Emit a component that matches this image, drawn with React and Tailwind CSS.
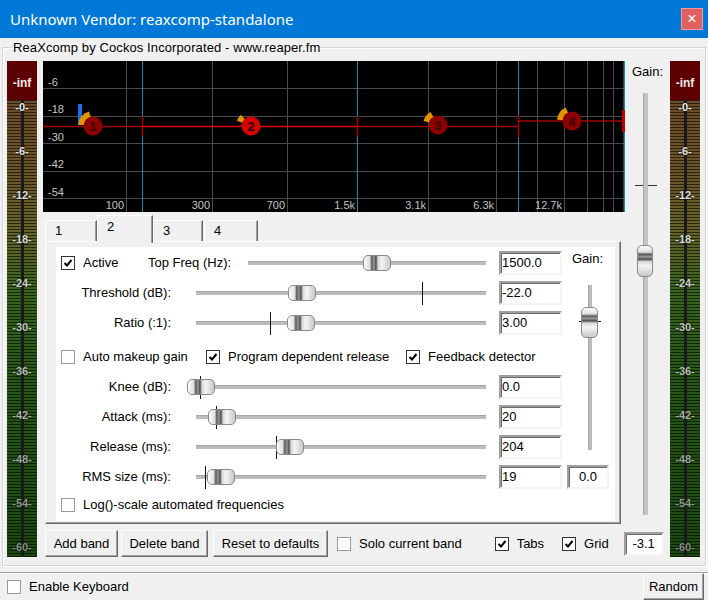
import React from 'react';

const meterLabels = [
  ['-0-', 'text-[#ececec]'],
  ['-6-', 'text-[#e4e4e4]'],
  ['-12-', 'text-[#dedede]'],
  ['-18-', 'text-[#d6dad2]'],
  ['-24-', 'text-[#cad2c6]'],
  ['-30-', 'text-[#bec8ba]'],
  ['-36-', 'text-[#b2beae]'],
  ['-42-', 'text-[#a6b2a2]'],
  ['-48-', 'text-[#9aa696]'],
  ['-54-', 'text-[#8e9a8c]'],
  ['-60-', 'text-[#828e82]'],
];

function Meter() {
  return (
    <div className="w-[30px] h-[496px] flex flex-col shrink-0">
      <div className="h-[39px] pt-[4px] bg-[#5c0000] flex items-center justify-center text-[12px] font-bold text-[#f4e8e8]">
        -inf
      </div>
      <div className="flex-1 flex flex-col items-center gap-[30px] bg-[linear-gradient(to_right,transparent_14px,#1a1a1a_14px,#1a1a1a_17px,transparent_17px),repeating-linear-gradient(to_bottom,rgba(0,0,0,0.6)_0px,rgba(0,0,0,0.6)_1px,transparent_1px,transparent_3px),linear-gradient(to_bottom,#6e4c2a_0%,#6a5628_16%,#66622a_28%,#3a641e_42%,#285818_60%,#1c4810_100%)]">
        {meterLabels.map(([t, c]) => (
          <div key={t} className={`h-[14px] leading-[14px] text-[11px] font-bold ${c} [text-shadow:0_0_2px_#000]`}>
            {t}
          </div>
        ))}
      </div>
    </div>
  );
}

function Graph() {
  const hLines = [27, 55, 82, 110, 137];
  const dbLabels = [['-6', 25], ['-18', 52], ['-30', 80], ['-42', 107], ['-54', 135]];
  const vGray = [126, 212, 287, 357, 428, 496, 537, 564, 587, 603, 613];
  const vTeal = [142, 357, 518, 624];
  const freq = [['100', 124], ['300', 210], ['700', 285], ['1.5k', 355], ['3.1k', 426], ['6.3k', 494], ['12.7k', 562]];
  const bands = [
    { n: '1', cx: 50, cy: 65, a: [185, 255], sel: false },
    { n: '2', cx: 208, cy: 65, a: [200, 228], sel: true },
    { n: '3', cx: 395, cy: 64, a: [195, 240], sel: false },
    { n: '4', cx: 529, cy: 60, a: [185, 245], sel: false },
  ];
  const wedge = (cx, cy, [a1, a2], r = 15) => {
    const p = (a) => [cx + r * Math.cos((a * Math.PI) / 180), cy + r * Math.sin((a * Math.PI) / 180)];
    const [x1, y1] = p(a1);
    const [x2, y2] = p(a2);
    return `M${cx} ${cy} L${x1} ${y1} A${r} ${r} 0 0 1 ${x2} ${y2} Z`;
  };
  return (
    <svg width="582" height="151" className="block bg-black" fontFamily="Liberation Sans, Arial, sans-serif">
      {hLines.map((y) => (
        <line key={y} x1="0" x2="582" y1={y + 0.5} y2={y + 0.5} stroke="#4a4a4a" />
      ))}
      {vGray.map((x) => (
        <line key={x} x1={x - 43 + 0.5} x2={x - 43 + 0.5} y1="0" y2="151" stroke="#4a4a4a" />
      ))}
      {vTeal.map((x) => (
        <line key={'t' + x} x1={x - 43 + 0.5} x2={x - 43 + 0.5} y1="0" y2="151" stroke="#1f88aa" strokeWidth={x === 624 ? 2 : 1} />
      ))}
      {dbLabels.map(([t, y]) => (
        <text key={t} x="5" y={y} fontSize="11" fill="#c4c4c4">{t}</text>
      ))}
      {freq.map(([t, x]) => (
        <text key={t} x={x - 43} y="148" fontSize="11" fill="#c4c4c4" textAnchor="end">{t}</text>
      ))}
      <line x1="0" x2="99" y1="65.5" y2="65.5" stroke="#a00000" strokeWidth="1.5" />
      <line x1="99" x2="314" y1="65.5" y2="65.5" stroke="#e00000" strokeWidth="1.5" />
      <line x1="314" x2="475" y1="65.5" y2="65.5" stroke="#a00000" strokeWidth="1.5" />
      <line x1="475" x2="582" y1="60" y2="60" stroke="#a00000" strokeWidth="1.5" />
      <line x1="99.5" x2="99.5" y1="55" y2="75" stroke="#a00000" strokeWidth="1.5" />
      <line x1="314.5" x2="314.5" y1="55" y2="75" stroke="#a00000" strokeWidth="1.5" />
      <line x1="475.5" x2="475.5" y1="54" y2="76" stroke="#a00000" strokeWidth="1.5" />
      <line x1="580.5" x2="580.5" y1="49" y2="71" stroke="#c00000" strokeWidth="3" />
      <rect x="35" y="43" width="4" height="21" fill="#1e6ee6" />
      {bands.map((b) => (
        <g key={b.n}>
          <path d={wedge(b.cx, b.cy, b.a)} fill="#e09400" />
          <circle cx={b.cx} cy={b.cy} r="9.5" fill={b.sel ? '#d40000' : '#8c0000'} />
          <text x={b.cx} y={b.cy + 4.5} fontSize="13" fontWeight="bold" textAnchor="middle" fill={b.sel ? '#2a0000' : '#3a0000'}>
            {b.n}
          </text>
        </g>
      ))}
    </svg>
  );
}

function Check({ checked, label, className = '' }) {
  return (
    <div className={`flex items-center ${className}`}>
      <div className={`w-[14px] h-[14px] shrink-0 bg-white border ${checked ? 'border-[#333]' : 'border-[#9a9a9a]'} flex items-center justify-center`}>
        {checked && (
          <svg width="10" height="10" viewBox="0 0 10 10">
            <path d="M1.5 5 L4 7.5 L8.5 2" fill="none" stroke="#000" strokeWidth="2" />
          </svg>
        )}
      </div>
      {label && <span className="ml-[8px] whitespace-nowrap">{label}</span>}
    </div>
  );
}

function Field({ value, className = '', center = false }) {
  return (
    <div
      className={`h-[24px] bg-white border-2 border-t-[#a0a0a0] border-l-[#a0a0a0] border-r-[#f4f4f4] border-b-[#f4f4f4] shadow-[inset_1px_1px_0_#6a6a6a] flex items-center ${center ? 'justify-center' : 'pl-[1px]'} ${className}`}
    >
      {value}
    </div>
  );
}

function Thumb() {
  return (
    <div className="w-[28px] h-[16px] rounded-[5px] border border-[#8a8a8a] bg-[linear-gradient(to_right,#fbfbfb_0%,#e0e0e0_22%,#5a5a5a_30%,#9a9a9a_38%,#4e4e4e_46%,#d8d8d8_54%,#f4f4f4_68%,#c8c8c8_100%)]" />
  );
}

function HSlider({ thumb, tick, className = '', start = 196, end = 486 }) {
  return (
    <div className={`relative h-[24px] shrink-0 ${className}`} style={{ width: end - start }}>
      <div className="absolute left-0 right-0 top-[10px] h-[4px] bg-[#bcbcbc] border-t border-[#a6a6a6]" />
      {tick != null && <div className="absolute top-[1px] w-[1px] h-[23px] bg-[#111]" style={{ left: tick - start }} />}
      <div className="absolute top-[4px]" style={{ left: thumb - start }}>
        <Thumb />
      </div>
    </div>
  );
}

function SliderRow({ label, thumb, tick, value }) {
  return (
    <div className="h-[30px] flex items-center">
      <div className="w-[115px] text-right whitespace-nowrap">{label}</div>
      <HSlider thumb={thumb} tick={tick} className="ml-[25px]" />
      <Field value={value} className="ml-[13px] w-[63px]" />
    </div>
  );
}

function VThumb({ h = 31, w = 17 }) {
  return (
    <div
      className="rounded-[5px] border border-[#8a8a8a] bg-[linear-gradient(to_bottom,#fbfbfb_0%,#e0e0e0_20%,#5a5a5a_28%,#9a9a9a_36%,#4e4e4e_44%,#d8d8d8_52%,#f4f4f4_66%,#c8c8c8_100%)]"
      style={{ width: w, height: h }}
    />
  );
}

function Tab({ label, selected, className = '' }) {
  return (
    <div
      className={`relative border-t border-l border-white border-r border-r-[#696969] shadow-[inset_-1px_0_0_#a0a0a0] leading-[15px] ${
        selected ? 'h-[28px] -mb-[2px] z-10 bg-[#f0f0f0] pt-[3px]' : 'h-[21px] pt-[2px]'
      } pl-[9px] ${className}`}
    >
      {label}
    </div>
  );
}

function Button({ children, className = '' }) {
  return (
    <div
      className={`h-[27px] flex items-center justify-center bg-[#f0f0f0] border border-t-white border-l-white border-r-[#696969] border-b-[#696969] shadow-[inset_-1px_-1px_0_#a0a0a0] whitespace-nowrap ${className}`}
    >
      {children}
    </div>
  );
}

export default function App() {
  return (
    <div className="w-[708px] h-[600px] bg-[#f0f0f0] flex flex-col overflow-hidden text-[13px] text-black font-['Liberation_Sans',Arial,sans-serif]">
      {/* title bar */}
      <div className="h-[38px] shrink-0 bg-[#0078d7] flex items-center justify-between pl-[10px] pr-[5px]">
        <span className="text-white text-[15px] font-['Noto_Sans',sans-serif] leading-none">Unknown Vendor: reaxcomp-standalone</span>
        <div className="w-[22px] h-[22px] bg-[#e06060] border border-[#f09a9a] flex items-center justify-center text-white text-[16px] leading-none">
          ×
        </div>
      </div>

      {/* group box */}
      <fieldset className="mx-[2px] mt-[2px] h-[528px] border border-[#d5d5d5] shadow-[1px_1px_0_#fff,inset_1px_1px_0_#fff] pl-[4px] pr-[4px] pt-[6px]">
        <legend className="ml-[5px] px-[1px] h-[15px] leading-[15px] tracking-[0.1px]">ReaXcomp by Cockos Incorporated - www.reaper.fm</legend>
        <div className="flex">
          <Meter />
          <div className="ml-[6px] w-[625px] flex flex-col">
            <div className="flex">
              <div className="w-[582px] flex flex-col">
                <Graph />
                {/* tabs */}
                <div className="mt-[3px] h-[26px] flex items-end pl-[2px]">
                  <Tab label="1" className="w-[52px]" />
                  <Tab label="2" selected className="w-[56px]" />
                  <Tab label="3" className="w-[50px]" />
                  <Tab label="4" className="w-[54px] ml-[1px]" />
                </div>
                <div className="ml-[2px] w-[576px] h-[283px] border border-t-white border-l-white border-r-[#696969] border-b-[#696969] shadow-[inset_-1px_-1px_0_#a0a0a0] pl-[10px] pt-[5px]">
                  <div className="w-[559px] h-[274px] bg-white flex pt-[1px]">
                    <div className="w-[506px] flex flex-col">
                      <div className="h-[30px] flex items-center">
                        <div className="w-[92px] pl-[5px]">
                          <Check checked label="Active" />
                        </div>
                        <div className="w-[100px] whitespace-nowrap">Top Freq (Hz):</div>
                        <HSlider start={248} thumb={363} />
                        <Field value="1500.0" className="ml-[13px] w-[63px]" />
                      </div>
                      <SliderRow label="Threshold (dB):" thumb={288} tick={422} value="-22.0" />
                      <SliderRow label="Ratio (:1):" thumb={287} tick={270} value="3.00" />
                      <div className="h-[34px] pt-[4px] flex items-center">
                        <div className="w-[150px] pl-[5px]">
                          <Check label="Auto makeup gain" />
                        </div>
                        <div className="w-[200px]">
                          <Check checked label="Program dependent release" />
                        </div>
                        <Check checked label="Feedback detector" />
                      </div>
                      <SliderRow label="Knee (dB):" thumb={187} tick={200} value="0.0" />
                      <SliderRow label="Attack (ms):" thumb={208} tick={216} value="20" />
                      <SliderRow label="Release (ms):" thumb={276} tick={276} value="204" />
                      <SliderRow label="RMS size (ms):" thumb={207} tick={205} value="19" />
                      <div className="h-[26px] flex items-center pl-[5px]">
                        <Check label="Log()-scale automated frequencies" />
                      </div>
                    </div>
                    {/* band gain column */}
                    <div className="ml-[5px] w-[42px] flex flex-col">
                      <div className="mt-[3px] h-[16px] leading-[16px] pl-[5px]">Gain:</div>
                      <div className="mt-[18px] ml-[21px] relative w-[4px] h-[165px] bg-[#bcbcbc] border-l border-[#a6a6a6]">
                        <div className="absolute left-[-10px] top-[36px] w-[22px] h-[1px] bg-[#111]" />
                        <div className="absolute left-[-8px] top-[22px]">
                          <VThumb />
                        </div>
                      </div>
                      <Field value="0.0" center className="mt-[15px] w-[42px]" />
                    </div>
                  </div>
                </div>
              </div>
              {/* master gain column */}
              <div className="w-[43px] flex flex-col">
                <div className="mt-[3px] h-[15px] leading-[15px] pl-[7px]">Gain:</div>
                <div className="mt-[14px] ml-[18px] relative w-[5px] h-[422px]">
                  <div className="absolute left-[-8px] top-[92px] w-[22px] h-[1px] bg-[#333]" />
                  <div className="absolute inset-0 bg-[#c4c4c4] border-l border-[#a6a6a6]" />
                  <div className="absolute left-[-6px] top-[152px]">
                    <VThumb h={32} w={16} />
                  </div>
                </div>
              </div>
            </div>
            {/* button row */}
            <div className="mt-[6px] h-[27px] flex items-center">
              <Button className="ml-[2px] w-[73px]">Add band</Button>
              <Button className="ml-[3px] w-[87px]">Delete band</Button>
              <Button className="ml-[5px] w-[115px]">Reset to defaults</Button>
              <Check label="Solo current band" className="ml-[9px]" />
              <Check checked label="Tabs" className="ml-[33px]" />
              <Check checked label="Grid" className="ml-[18px]" />
              <Field value="-3.1" center className="ml-[15px] w-[40px]" />
            </div>
          </div>
          <div className="ml-[2px]">
            <Meter />
          </div>
        </div>
      </fieldset>

      {/* status bar */}
      <div className="mt-[6px] flex-1 border-t border-[#a0a0a0] shadow-[inset_0_1px_0_#fff] flex items-center justify-between pl-[7px] pr-[4px]">
        <Check label="Enable Keyboard" />
        <Button className="w-[61px] h-[23px]">Random</Button>
      </div>
    </div>
  );
}
